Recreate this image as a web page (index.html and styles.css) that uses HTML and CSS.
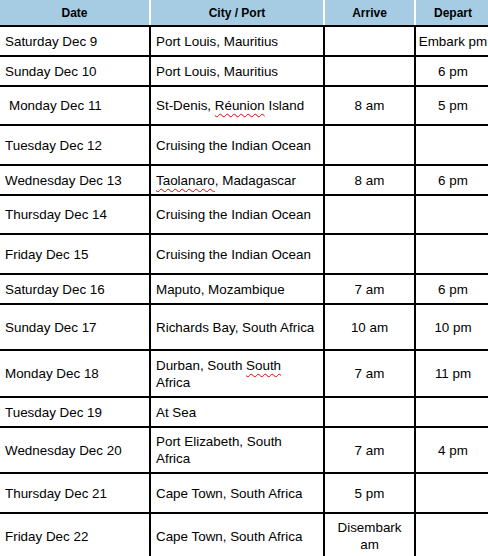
FILE: index.html
```html
<!DOCTYPE html>
<html>
<head>
<meta charset="utf-8">
<link rel="stylesheet" href="styles.css">
</head>
<body>
<div class="frame">
<table class="itinerary">
  <colgroup>
    <col class="c-date"><col class="c-city"><col class="c-arr"><col class="c-dep">
  </colgroup>
  <thead>
    <tr class="h-head"><th>Date</th><th>City / Port</th><th>Arrive</th><th>Depart</th></tr>
  </thead>
  <tbody>
    <tr class="h30"><td>Saturday Dec 9</td><td>Port Louis, Mauritius</td><td class="t"></td><td class="t">Embark pm</td></tr>
    <tr class="h30"><td>Sunday Dec 10</td><td>Port Louis, Mauritius</td><td class="t"></td><td class="t">6 pm</td></tr>
    <tr class="h39"><td class="indent">Monday Dec 11</td><td>St-Denis, <span class="sp">Réunion</span> Island</td><td class="t">8 am</td><td class="t">5 pm</td></tr>
    <tr class="h40"><td>Tuesday Dec 12</td><td>Cruising the Indian Ocean</td><td class="t"></td><td class="t"></td></tr>
    <tr class="h30"><td>Wednesday Dec 13</td><td><span class="sp">Taolanaro</span>, Madagascar</td><td class="t">8 am</td><td class="t">6 pm</td></tr>
    <tr class="h39"><td>Thursday Dec 14</td><td>Cruising the Indian Ocean</td><td class="t"></td><td class="t"></td></tr>
    <tr class="h40"><td>Friday Dec 15</td><td>Cruising the Indian Ocean</td><td class="t"></td><td class="t"></td></tr>
    <tr class="h30"><td>Saturday Dec 16</td><td>Maputo, Mozambique</td><td class="t">7 am</td><td class="t">6 pm</td></tr>
    <tr class="h46"><td>Sunday Dec 17</td><td>Richards Bay, South Africa</td><td class="t">10 am</td><td class="t">10 pm</td></tr>
    <tr class="h47"><td>Monday Dec 18</td><td>Durban, South <span class="sp">South</span><br>Africa</td><td class="t">7 am</td><td class="t">11 pm</td></tr>
    <tr class="h30"><td>Tuesday Dec 19</td><td>At Sea</td><td class="t"></td><td class="t"></td></tr>
    <tr class="h46"><td>Wednesday Dec 20</td><td>Port Elizabeth, South<br>Africa</td><td class="t">7 am</td><td class="t">4 pm</td></tr>
    <tr class="h40"><td>Thursday Dec 21</td><td>Cape Town, South Africa</td><td class="t">5 pm</td><td class="t"></td></tr>
    <tr class="h46"><td>Friday Dec 22</td><td>Cape Town, South Africa</td><td class="t">Disembark<br>am</td><td class="t"></td></tr>
  </tbody>
</table>
</div>
</body>
</html>
```

FILE: styles.css
```css
html, body {
  margin: 0;
  padding: 0;
  background: #fff;
}
.frame {
  width: 488px;
  height: 556px;
  overflow: hidden;
}
.itinerary {
  border-collapse: collapse;
  table-layout: fixed;
  width: 492px;
  margin: -2px 0 0 -2px;
  font-family: "Liberation Sans", Arial, sans-serif;
  font-size: 13.4px;
  color: #000;
}
.c-date { width: 151px; }
.c-city { width: 174px; }
.c-arr { width: 91px; }
.c-dep { width: 76px; }
.itinerary th {
  background: #a6cce3;
  font-weight: bold;
  font-size: 12px;
  text-align: center;
  border: 2px solid #fff;
  border-bottom: 2px solid #000;
  padding: 0;
}
.itinerary td {
  box-sizing: border-box;
  border: 2px solid #000;
  padding: 0 4px 0 5px;
  vertical-align: middle;
  line-height: 17px;
}
.itinerary td.t { text-align: center; padding: 0 2px; }
.itinerary td.indent { padding-left: 9px; }
.h-head { height: 27px; }
.h30 td { height: 30px; }
.h39 td { height: 39px; }
.h40 td { height: 40px; }
.h46 td { height: 46px; }
.h47 td { height: 47px; }
.sp {
  text-decoration: underline wavy #e00000;
  text-decoration-thickness: 1px;
  text-underline-offset: 3px;
}
```
